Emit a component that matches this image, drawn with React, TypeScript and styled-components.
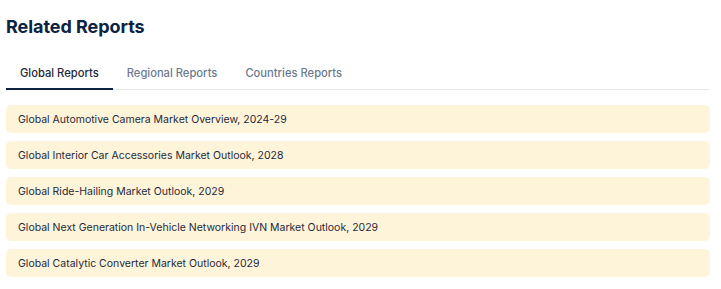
import React, { useState } from "react";
import styled, { createGlobalStyle } from "styled-components";

const Global = createGlobalStyle`
  html, body { margin: 0; padding: 0; background: #ffffff; }
  body { font-family: Inter, "Noto Sans", sans-serif; -webkit-font-smoothing: antialiased; }
  * { box-sizing: border-box; }
`;

const Wrapper = styled.section`
  width: 704px;
  margin-left: 6px;
  padding-top: 15px;
`;

const Title = styled.h2`
  margin: 0;
  font-size: 18px;
  line-height: 24px;
  font-weight: 700;
  color: #0d2340;
  letter-spacing: -0.05px;
`;

const TabBar = styled.div`
  display: flex;
  margin-top: 20px;
  border-bottom: 1px solid #e5e7eb;
`;

const Tab = styled.button<{ $active?: boolean }>`
  border: none;
  background: none;
  font-family: inherit;
  font-size: 11.2px;
  font-weight: 500;
  line-height: 16px;
  padding: 6px 14px 7px;
  margin-bottom: -1px;
  cursor: pointer;
  color: ${(p) => (p.$active ? "#1f2937" : "#6b7a90")};
  border-bottom: 2px solid ${(p) => (p.$active ? "#0d2340" : "transparent")};
`;

const List = styled.ul`
  list-style: none;
  margin: 15px 0 0;
  padding: 0;
  display: flex;
  flex-direction: column;
  gap: 8px;
`;

const Item = styled.li`
  height: 28px;
  display: flex;
  align-items: center;
  padding: 0 12px;
  background: #fef4d9;
  border-radius: 5px;
  font-size: 10.5px;
  color: #1e2a3b;
`;

const tabs = ["Global Reports", "Regional Reports", "Countries Reports"];
const reports = [
  "Global Automotive Camera Market Overview, 2024-29",
  "Global Interior Car Accessories Market Outlook, 2028",
  "Global Ride-Hailing Market Outlook, 2029",
  "Global Next Generation In-Vehicle Networking IVN Market Outlook, 2029",
  "Global Catalytic Converter Market Outlook, 2029",
];

export default function App() {
  const [active, setActive] = useState(0);
  return (
    <>
      <Global />
      <Wrapper>
        <Title>Related Reports</Title>
        <TabBar>
          {tabs.map((t, i) => (
            <Tab key={t} $active={i === active} onClick={() => setActive(i)}>
              {t}
            </Tab>
          ))}
        </TabBar>
        <List>
          {reports.map((r) => (
            <Item key={r}>{r}</Item>
          ))}
        </List>
      </Wrapper>
    </>
  );
}
